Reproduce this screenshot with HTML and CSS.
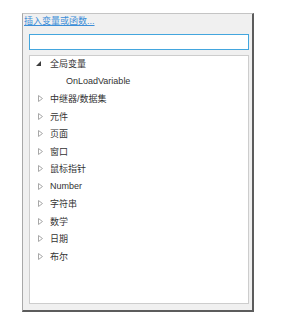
FILE: index.html
```html
<!DOCTYPE html>
<html lang="zh-CN">
<head>
  <meta charset="UTF-8" />
  <title>插入变量或函数</title>
  <link rel="stylesheet" href="styles.css">
</head>
<body>
  <div class="dialog">
    <a href="#" class="insert-link">插入变量或函数...</a>
    <input type="text" class="search" />
    <ul class="tree">
      <li class="row">
        <span class="twisty"><svg width="8" height="7" viewBox="0 0 8 7"><polygon points="5,1 5,6 0,6" fill="#3c3c3c"/></svg></span>
        <span class="label">全局变量</span>
      </li>
      <li class="row child"><span class="label">OnLoadVariable</span></li>
      <li class="row"><span class="twisty"><svg width="8" height="7" viewBox="0 0 8 7"><polygon points="2.5,0.5 6.5,3.5 2.5,6.5" fill="#fff" stroke="#a8a8a8"/></svg></span><span class="label">中继器/数据集</span></li>
      <li class="row"><span class="twisty"><svg width="8" height="7" viewBox="0 0 8 7"><polygon points="2.5,0.5 6.5,3.5 2.5,6.5" fill="#fff" stroke="#a8a8a8"/></svg></span><span class="label">元件</span></li>
      <li class="row"><span class="twisty"><svg width="8" height="7" viewBox="0 0 8 7"><polygon points="2.5,0.5 6.5,3.5 2.5,6.5" fill="#fff" stroke="#a8a8a8"/></svg></span><span class="label">页面</span></li>
      <li class="row"><span class="twisty"><svg width="8" height="7" viewBox="0 0 8 7"><polygon points="2.5,0.5 6.5,3.5 2.5,6.5" fill="#fff" stroke="#a8a8a8"/></svg></span><span class="label">窗口</span></li>
      <li class="row"><span class="twisty"><svg width="8" height="7" viewBox="0 0 8 7"><polygon points="2.5,0.5 6.5,3.5 2.5,6.5" fill="#fff" stroke="#a8a8a8"/></svg></span><span class="label">鼠标指针</span></li>
      <li class="row"><span class="twisty"><svg width="8" height="7" viewBox="0 0 8 7"><polygon points="2.5,0.5 6.5,3.5 2.5,6.5" fill="#fff" stroke="#a8a8a8"/></svg></span><span class="label">Number</span></li>
      <li class="row"><span class="twisty"><svg width="8" height="7" viewBox="0 0 8 7"><polygon points="2.5,0.5 6.5,3.5 2.5,6.5" fill="#fff" stroke="#a8a8a8"/></svg></span><span class="label">字符串</span></li>
      <li class="row"><span class="twisty"><svg width="8" height="7" viewBox="0 0 8 7"><polygon points="2.5,0.5 6.5,3.5 2.5,6.5" fill="#fff" stroke="#a8a8a8"/></svg></span><span class="label">数学</span></li>
      <li class="row"><span class="twisty"><svg width="8" height="7" viewBox="0 0 8 7"><polygon points="2.5,0.5 6.5,3.5 2.5,6.5" fill="#fff" stroke="#a8a8a8"/></svg></span><span class="label">日期</span></li>
      <li class="row"><span class="twisty"><svg width="8" height="7" viewBox="0 0 8 7"><polygon points="2.5,0.5 6.5,3.5 2.5,6.5" fill="#fff" stroke="#a8a8a8"/></svg></span><span class="label">布尔</span></li>
    </ul>
  </div>
</body>
</html>
```

FILE: styles.css
```css
body {
  margin: 0;
  background: #fff;
  font-family: "Liberation Sans", "Noto Sans CJK SC", sans-serif;
  font-size: 9px;
  color: #333;
}

.dialog {
  margin: 13px 0 0 22px;
  width: 232px;
  height: 299px;
  box-sizing: border-box;
  background: #f0f0f0;
  border-top: 1px solid #c4c4c4;
  border-left: 1px solid #a8a8a8;
  border-right: 2px solid #5c5c5c;
  border-bottom: 2px solid #5c5c5c;
  display: flex;
  flex-direction: column;
}

.insert-link {
  display: block;
  margin: 1px 0 0 1px;
  height: 13px;
  line-height: 13px;
  color: #3c8ed8;
  text-decoration: underline;
  align-self: flex-start;
}

.search {
  margin: 6px 0 0 6px;
  width: 220px;
  height: 16px;
  box-sizing: border-box;
  border: 1px solid #43a6de;
  background: #fff;
  padding: 0 3px;
  outline: none;
}

.tree {
  list-style: none;
  margin: 5px 0 0 6px;
  padding: 0;
  width: 220px;
  height: 249px;
  box-sizing: border-box;
  background: #fff;
  border: 1px solid #cdcdcd;
}

.row {
  display: flex;
  align-items: center;
  height: 17.5px;
  padding-left: 6px;
}

.row:first-child {
  margin-top: -1px;
}

.twisty {
  display: flex;
  width: 8px;
  margin-right: 6px;
}

.row.child {
  padding-left: 36px;
}
```
